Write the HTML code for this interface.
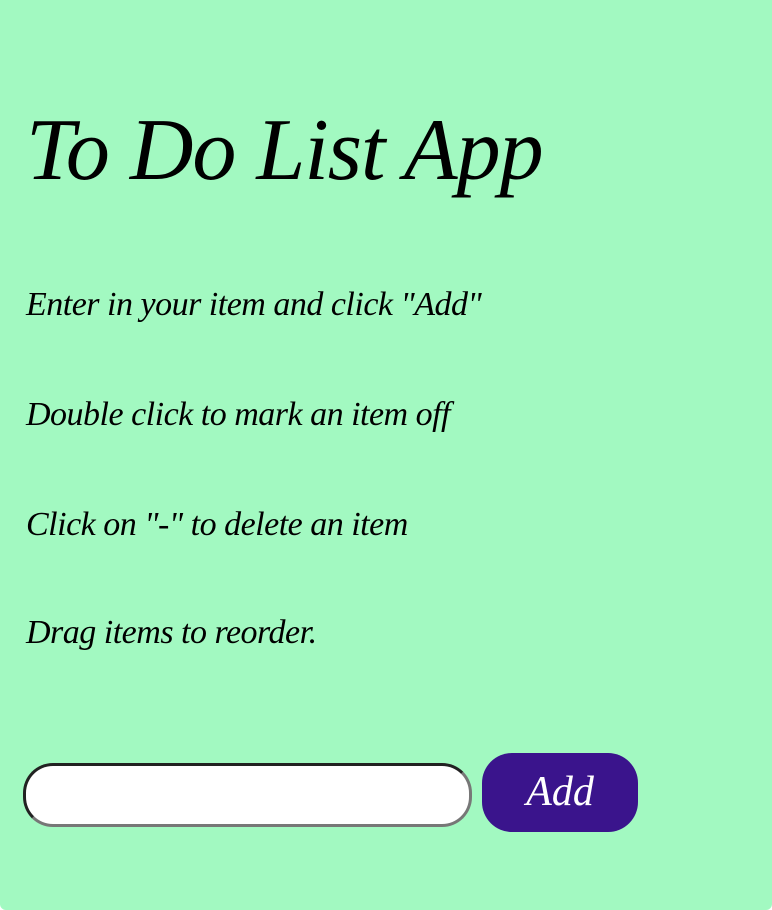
<!DOCTYPE html>
<html><head><style>
html,body{margin:0;padding:0;background:#fff;}
.page{width:772px;height:910px;background:#a2f9c1;border-radius:0 0 6px 6px;position:relative;overflow:hidden;font-family:"Liberation Serif",serif;font-style:italic;color:#000;}
h1{position:absolute;left:26px;top:100px;margin:0;font-size:88px;font-weight:normal;letter-spacing:-1px;white-space:nowrap;}
p{position:absolute;left:26px;margin:0;font-size:34px;letter-spacing:-0.5px;white-space:nowrap;}
.inp{position:absolute;left:23px;top:763px;width:443px;height:58px;background:#fff;border:3px solid;border-color:#222 #777 #777 #222;border-radius:30px;}
.btn{position:absolute;left:482px;top:753px;width:156px;height:79px;background:#3a148c;border-radius:30px;color:#fff;font-size:42px;text-align:center;line-height:79px;}
</style></head><body><div class="page">
<h1>To Do List App</h1>
<p style="top:286px">Enter in your item and click "Add"</p>
<p style="top:396px">Double click to mark an item off</p>
<p style="top:506px">Click on "-" to delete an item</p>
<p style="top:614px">Drag items to reorder.</p>
<div class="inp"></div>
<div class="btn">Add</div>
</div></body></html>
